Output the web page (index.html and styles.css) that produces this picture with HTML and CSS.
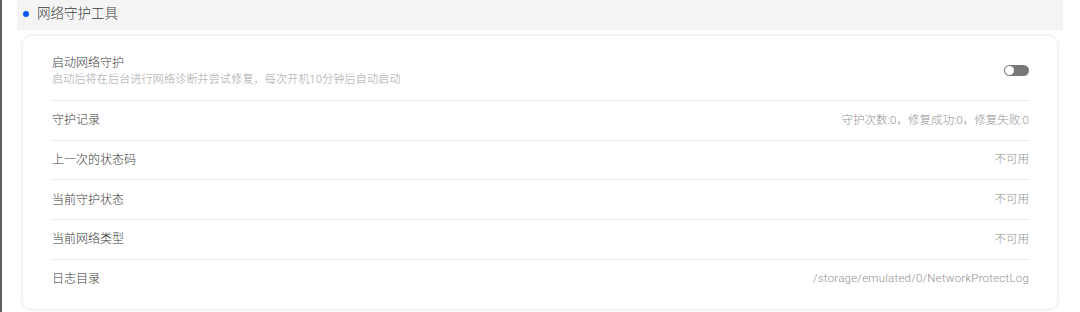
FILE: index.html
```html
<!DOCTYPE html>
<html lang="zh-CN">
<head>
  <meta charset="UTF-8" />
  <title>网络守护工具</title>
  <link rel="stylesheet" href="styles.css">
</head>
<body>
  <div class="section-head">
    <span class="dot"></span>
    <span class="section-title">网络守护工具</span>
  </div>
  <div class="card">
    <div class="row row-tall">
      <div class="row-text">
        <div class="label">启动网络守护</div>
        <div class="hint">启动后将在后台进行网络诊断并尝试修复，每次开机10分钟后自动启动</div>
      </div>
      <div class="switch"><span class="knob"></span></div>
    </div>
    <div class="row">
      <div class="label">守护记录</div>
      <div class="value">守护次数:0，修复成功:0，修复失败:0</div>
    </div>
    <div class="row">
      <div class="label">上一次的状态码</div>
      <div class="value">不可用</div>
    </div>
    <div class="row">
      <div class="label">当前守护状态</div>
      <div class="value">不可用</div>
    </div>
    <div class="row">
      <div class="label">当前网络类型</div>
      <div class="value">不可用</div>
    </div>
    <div class="row">
      <div class="label">日志目录</div>
      <div class="value path">/storage/emulated/0/NetworkProtectLog</div>
    </div>
  </div>
</body>
</html>
```

FILE: styles.css
```css
* { margin: 0; padding: 0; box-sizing: border-box; }
html, body { height: 100%; }
body {
  background: #fff;
  border-left: 2px solid #606060;
  font-family: Roboto, "Noto Sans CJK SC", sans-serif;
  font-weight: 300;
  color: #3a3a3a;
  overflow: hidden;
}
.section-head {
  display: flex; align-items: center;
  height: 30px; margin: 0 17px 0 15px; padding-left: 6px;
  background: #f4f4f4;
}
.dot { width: 6px; height: 6px; border-radius: 50%; background: #0a59f7; margin-top: -2px; }
.section-title { margin-left: 8px; font-size: 13.5px; color: #3c3c3c; line-height: 1; margin-top: -3px; }
.card {
  margin: 6px 23px 0 21px;
  height: 273px;
  padding: 8px 28px 0 29px;
  background: #fff;
  border-radius: 9px;
  box-shadow: 0 0 4px rgba(0,0,0,0.14);
}
.row {
  display: flex; align-items: center; justify-content: space-between;
  height: 39.7px;
  border-top: 1px solid #ebebeb;
}
.row-tall { height: 56px; border-top: none; }
.label { font-size: 12px; color: #3a3a3a; line-height: 1; }
.row-tall .label { margin-top: -2px; }
.hint { font-size: 11px; color: #a3a3a3; margin-top: 5px; line-height: 1; letter-spacing: 0.2px; }
.value { font-size: 11.5px; color: #929292; line-height: 1; }
.value.path { letter-spacing: 0.22px; }
.switch {
  width: 25px; height: 11px; border-radius: 6px;
  background: #787878; position: relative; margin-top: -4px;
}
.knob {
  position: absolute; left: 1px; top: 1px;
  width: 9px; height: 9px; border-radius: 50%; background: #fff;
}
```
